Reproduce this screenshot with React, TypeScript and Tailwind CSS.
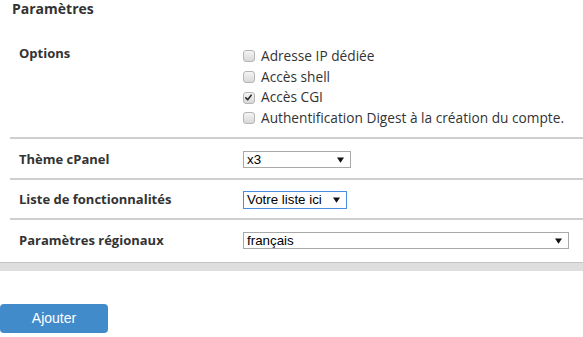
import React from "react";

function Box({ checked }: { checked?: boolean }) {
  return (
    <span className="relative inline-block w-[12px] h-[12px] shrink-0 rounded-[3px] border border-[#b5b5b5] bg-gradient-to-b from-[#f4f4f4] to-[#d8d8d8]">
      {checked && (
        <svg viewBox="0 0 12 12" className="absolute left-[0px] top-[0px] w-[10px] h-[10px]">
          <path d="M2.2 5.8 L4.4 8 L8.6 2.6" fill="none" stroke="#2a2a2a" strokeWidth="1.9" strokeLinecap="round" strokeLinejoin="round" />
        </svg>
      )}
    </span>
  );
}

function Caret() {
  return (
    <svg viewBox="0 0 8 6" className="w-[7px] h-[6px]">
      <path d="M0 0 H8 L4 6 Z" fill="#111" />
    </svg>
  );
}

export default function App() {
  const opts: [string, boolean][] = [
    ["Adresse IP dédiée", false],
    ["Accès shell", false],
    ["Accès CGI", true],
    ["Authentification Digest à la création du compte.", false],
  ];
  return (
    <div className="w-[583px] h-[337px] bg-white overflow-hidden text-[#333] font-['Open_Sans',sans-serif]">
      <h2 className="pl-[12px] pt-[0px] h-[40px] text-[14px] font-bold leading-[17px] text-[#333]">Paramètres</h2>
      <div className="ml-[10px]">
        <div className="flex h-[97px]">
          <div className="w-[233px] pl-[9px] pt-[3px] text-[13px] font-bold leading-[20px]">Options</div>
          <div className="flex flex-col pt-[6px]">
            {opts.map(([t, c]) => (
              <label key={t} className="flex items-center gap-[6px] h-[20.7px] text-[13.7px] text-[#333]">
                <Box checked={c} />
                <span>{t}</span>
              </label>
            ))}
          </div>
        </div>
        <div className="h-[2px] bg-[#cfcfcf]" />
        <div className="flex items-center h-[39px] pt-[2px]">
          <div className="w-[233px] pl-[9px] text-[13px] font-bold">Thème cPanel</div>
          <div className="flex items-center justify-between w-[108px] h-[17px] border border-[#a9a9a9] bg-white pl-[3px] pr-[6px] font-['Liberation_Sans',Arial,sans-serif] text-[13.33px] leading-[15px] text-black">
            <span>x3</span>
            <Caret />
          </div>
        </div>
        <div className="h-[2px] bg-[#cfcfcf]" />
        <div className="flex items-center h-[38px] pt-[1px]">
          <div className="w-[233px] pl-[9px] text-[13px] font-bold">Liste de fonctionnalités</div>
          <div className="flex items-center justify-between w-[104px] h-[18px] border border-[#4a8de0] bg-white pl-[3px] pr-[6px] font-['Liberation_Sans',Arial,sans-serif] text-[13.33px] leading-[15px] text-black">
            <span>Votre liste ici</span>
            <Caret />
          </div>
        </div>
        <div className="h-[2px] bg-[#cfcfcf]" />
        <div className="flex items-center h-[42px] pb-[1px]">
          <div className="w-[233px] pl-[9px] text-[13px] font-bold">Paramètres régionaux</div>
          <div className="flex items-center justify-between w-[326px] h-[17px] border border-[#a9a9a9] bg-white pl-[3px] pr-[6px] font-['Liberation_Sans',Arial,sans-serif] text-[13.33px] leading-[15px] text-black">
            <span>français</span>
            <Caret />
          </div>
        </div>
      </div>
      <div className="h-[1px] bg-[#c4c4c4]" />
      <div className="h-[8px] bg-[#dedede]" />
      <div className="pt-[33px]">
        <button className="w-[108px] h-[29px] rounded-[4px] bg-[#428bca] text-white text-[14px] font-['Liberation_Sans',Arial,sans-serif]">
          Ajouter
        </button>
      </div>
    </div>
  );
}
